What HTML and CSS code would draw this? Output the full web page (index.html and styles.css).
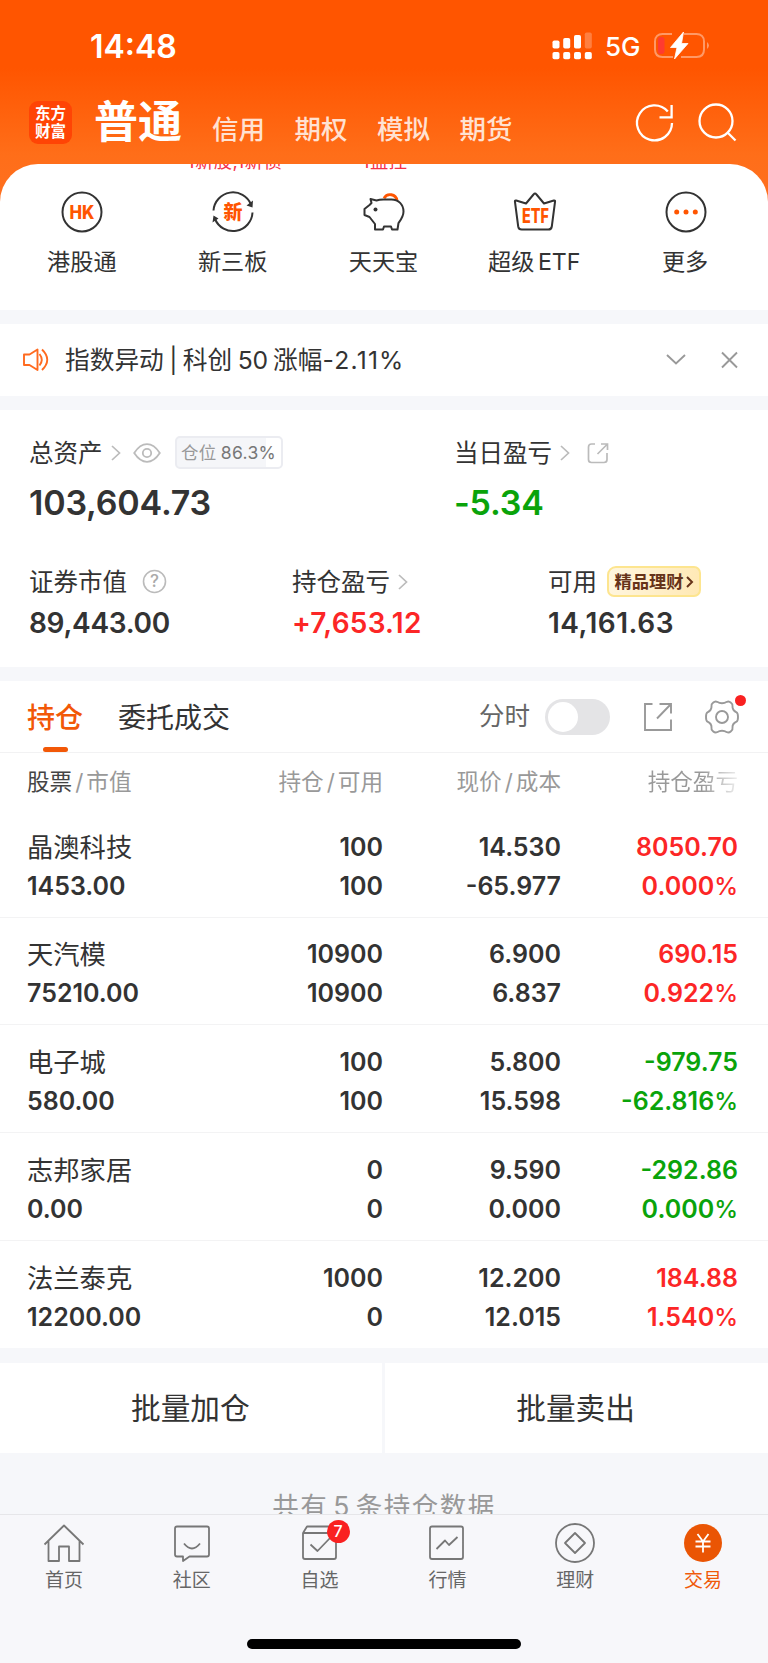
FILE: index.html
```html
<!DOCTYPE html>
<html lang="zh-CN">
<head>
<meta charset="utf-8">
<title>交易</title>
<link rel="stylesheet" href="styles.css">
</head>
<body>
<div class="app">
  <header class="header">
    <div class="status">
      <span class="time">14:48</span>
      <div class="status-right">
        <svg class="signal" width="40" height="28" viewBox="0 0 40 28" fill="#fff">
          <rect x="0.500" y="8.500" width="7" height="8" rx="1.800"/><rect x="11.200" y="6" width="7" height="10.500" rx="1.800"/><rect x="22" y="3" width="7" height="13.500" rx="1.800"/><rect x="32.800" y="0.500" width="7" height="16" rx="1.800" opacity=".25"/>
          <rect x="0.500" y="20" width="7" height="7.200" rx="1.800"/><rect x="11.200" y="20" width="7" height="7.200" rx="1.800"/><rect x="22" y="20" width="7" height="7.200" rx="1.800"/><rect x="32.800" y="20" width="7" height="7.200" rx="1.800"/>
        </svg>
        <span class="net">5G</span>
        <svg class="battery" width="57" height="28" viewBox="0 0 57 28" fill="none">
          <path d="M19 2H9.500C5 2 2 5 2 9.500v8C2 22.500 5 25 9.500 25H20M31 2h12.500C48 2 51 5 51 9.500v8c0 5-3 7.500-7.500 7.500H28" stroke="#fff" stroke-opacity=".4" stroke-width="2"/>
          <path d="M54 10q4 3.500 0 7z" fill="#fff" fill-opacity=".4"/>
          <rect x="5" y="5" width="6.500" height="17" rx="3" fill="#ff3b30"/>
          <path d="M30.500 0 17.500 15.500h6.500L21.500 27 35 11.500h-6.500z" fill="#fff" stroke="#fff" stroke-width=".8"/>
        </svg>
      </div>
    </div>
    <nav class="accounts">
      <div class="logo"><span>东方</span><span>财富</span></div>
      <span class="acct active">普通</span>
      <span class="acct">信用</span><span class="acct">期权</span><span class="acct">模拟</span><span class="acct">期货</span>
      <svg class="head-icons" width="104" height="44" viewBox="0 0 104 44" fill="none" stroke="#fff" stroke-width="2.300">
        <path d="M40 22A17.500 17.500 0 1 1 35.800 10.500M39.600 4v12.300H27.500"/>
        <circle cx="84" cy="20" r="16.500"/><path d="m95.500 31.500 8 8"/>
      </svg>
    </nav>
  </header>

  <section class="shortcuts">
    <span class="tip tip-a">1新股,1新债</span>
    <span class="tip tip-b">1监控</span>
    <div class="short">
      <svg width="44" height="44" viewBox="0 0 44 44"><circle cx="22" cy="22" r="19.500" class="ln"/><text x="22" y="28.500" class="ic hk" textLength="25" lengthAdjust="spacingAndGlyphs">HK</text></svg>
      <span>港股通</span>
    </div>
    <div class="short">
      <svg width="44" height="44" viewBox="0 0 44 44"><path d="M2.500 20.500A19.500 19.500 0 0 1 40 14.500M41.500 22.500A19.500 19.500 0 0 1 4 29" class="ln"/><path d="m42 10.500-.5 7-6-2zM1.500 32.500 2.500 25.500l5 3z" fill="#333"/><text x="22" y="28.800" class="ic xin">新</text></svg>
      <span>新三板</span>
    </div>
    <div class="short">
      <svg width="44" height="44" viewBox="0 0 44 44"><path d="M22 8.200A7 7 0 0 1 35 10.500" fill="none" stroke="#ff5500" stroke-width="2.800"/><path d="M8.500 9l6 1.500c2-.7 4-1 7-1h8c7 0 12 5 12 12 0 5-2.500 8-5 11.500l-1 6.500h-5.500l-1-3h-7l-1 3H13v-5.500L7.500 27l-5-2v-6l5-4 2-2z" class="ln"/><circle cx="13.500" cy="19.500" r="2" fill="#333"/></svg>
      <span>天天宝</span>
    </div>
    <div class="short">
      <svg width="44" height="44" viewBox="0 0 44 44"><path d="M2 12q-.5-2 1.200-1.500l9.800 3L20.500 4.500q1.500-2 3 0l7.500 9 9.800-3q1.700-.5 1.200 1.500l-3.200 24.500q-.4 3-3.500 3H8.700q-3 0-3.500-3z" class="ln"/><text x="22.500" y="32.800" class="ic etf" textLength="27" lengthAdjust="spacingAndGlyphs">ETF</text></svg>
      <span class="super">超级 ETF</span>
    </div>
    <div class="short">
      <svg width="44" height="44" viewBox="0 0 44 44"><circle cx="22" cy="22" r="19.500" class="ln"/><g fill="#ff5500"><circle cx="12.700" cy="22" r="2.500"/><circle cx="22" cy="22" r="2.500"/><circle cx="31.300" cy="22" r="2.500"/></g></svg>
      <span>更多</span>
    </div>
  </section>

  <section class="notice">
    <svg width="28" height="26" viewBox="0 0 28 26" fill="none" stroke="#ff6a1f" stroke-width="1.900"><path d="M2 7.500h5.500L15.500 2.500v20.500L7.500 18H2z" stroke-linejoin="round"/><path d="M17.500 7q4.500 5.800 0 11.500M20 2.500q10.500 10.200 0 20.500"/></svg>
    <span class="notice-text">指数异动 | 科创 <span class="fifty">50</span> 涨幅<span class="pct">-2.11%</span></span>
    <svg width="74" height="20" viewBox="0 0 74 20" fill="none" stroke="#999" stroke-width="1.900"><path d="m2 5 9 8.500L20 5M57 2.500l15 15M72 2.500l-15 15"/></svg>
  </section>

  <section class="assets">
    <div class="asset a1">
      <div class="label">总资产<svg class="chev" width="12" height="18" viewBox="0 0 12 18"><path d="m2 2 7.500 7L2 16"/></svg>
        <svg class="eye" width="28" height="20" viewBox="0 0 28 20" fill="none" stroke="#bbb" stroke-width="1.800"><path d="M1.200 10Q7 1.200 14 1.200T26.800 10Q21 18.800 14 18.800T1.200 10z"/><circle cx="14" cy="10" r="4.200"/></svg>
        <span class="ratio">仓位 <b>86.3%</b></span></div>
      <div class="big">103,604.73</div>
    </div>
    <div class="asset a2">
      <div class="label">当日盈亏<svg class="chev" width="12" height="18" viewBox="0 0 12 18"><path d="m2 2 7.500 7L2 16"/></svg>
        <svg class="share" width="22" height="22" viewBox="0 0 22 22" fill="none" stroke="#bbb" stroke-width="1.700"><path d="M8 2H4.500Q1.500 2 1.500 5v12.500q0 3 3 3h12.500q3 0 3-3V11M14 2h6.500v6M20 2.500 10.500 12"/></svg></div>
      <div class="big green">-5.34</div>
    </div>
    <div class="asset b1"><div class="label">证券市值<svg class="help" width="25" height="25" viewBox="0 0 25 25"><circle cx="12.500" cy="12.500" r="11" fill="none" stroke="#bbb" stroke-width="1.600"/><text x="12.500" y="18.300">?</text></svg></div><div class="mid">89,443.00</div></div>
    <div class="asset b2"><div class="label">持仓盈亏<svg class="chev" width="12" height="18" viewBox="0 0 12 18"><path d="m2 2 7.500 7L2 16"/></svg></div><div class="mid red">+7,653.12</div></div>
    <div class="asset b3"><div class="label">可用<span class="promo">精品理财<svg width="8" height="12" viewBox="0 0 8 12"><path d="m1 1 5 5-5 5" fill="none" stroke="#663319" stroke-width="2"/></svg></span></div><div class="mid">14,161.63</div></div>
  </section>

  <section class="holdings">
    <div class="tabs">
      <span class="tab on">持仓</span><span class="tab">委托成交</span>
      <span class="fs">分时</span><span class="switch"></span>
      <svg class="out" width="30" height="30" viewBox="0 0 30 30" fill="none" stroke="#999" stroke-width="1.900"><path d="M9.500 2H2v26h26V17.500M16.500 2H28v9.500M28 2 14 16.500"/></svg>
      <span class="gear"><svg width="36" height="36" viewBox="0 0 36 36" fill="none" stroke="#999" stroke-width="1.900"><path d="M13 2.800q5 3 10 0 2-.8 4 1 2 1.500 1.500 3.500-.3 4 4 6 1.500 1 1.500 4.700t-1.500 4.700q-4.300 2-4 6 .5 2-1.500 3.500-2 1.800-4 1-5-3-10 0-2 .8-4-1-2-1.500-1.500-3.500.3-4-4-6Q2 21.700 2 18t1.500-4.700q4.300-2 4-6Q7 5.300 9 3.800q2-1.800 4-1z"/><circle cx="18" cy="18" r="6"/></svg><i></i></span>
    </div>
    <div class="row head"><div><em>股票</em><s>/</s>市值</div><div>持仓<s>/</s>可用</div><div>现价<s>/</s>成本</div><div class="fade">持仓盈亏</div></div>
    <div class="row"><div><p class="name">晶澳科技</p><p>1453.00</p></div><div><p>100</p><p>100</p></div><div><p>14.530</p><p>-65.977</p></div><div class="red"><p>8050.70</p><p>0.000<u>%</u></p></div></div>
    <div class="row"><div><p class="name">天汽模</p><p>75210.00</p></div><div><p>10900</p><p>10900</p></div><div><p>6.900</p><p>6.837</p></div><div class="red"><p>690.15</p><p>0.922<u>%</u></p></div></div>
    <div class="row"><div><p class="name">电子城</p><p>580.00</p></div><div><p>100</p><p>100</p></div><div><p>5.800</p><p>15.598</p></div><div class="green"><p>-979.75</p><p>-62.816<u>%</u></p></div></div>
    <div class="row"><div><p class="name">志邦家居</p><p>0.00</p></div><div><p>0</p><p>0</p></div><div><p>9.590</p><p>0.000</p></div><div class="green"><p>-292.86</p><p>0.000<u>%</u></p></div></div>
    <div class="row"><div><p class="name">法兰泰克</p><p>12200.00</p></div><div><p>1000</p><p>0</p></div><div><p>12.200</p><p>12.015</p></div><div class="red"><p>184.88</p><p>1.540<u>%</u></p></div></div>
  </section>

  <div class="batch"><button>批量加仓</button><button>批量卖出</button></div>
  <div class="count">共有 5 条持仓数据</div>

  <nav class="tabbar">
    <div class="item"><svg width="42" height="42" viewBox="0 0 42 42"><path d="M1.500 22.500 21 3.500l19.500 19M5.500 19v20h10.500V24.500h10V39h10.500V19"/></svg><span>首页</span></div>
    <div class="item"><svg width="42" height="42" viewBox="0 0 42 42"><path d="M6 4.500h30q2 0 2 2v26q0 2-2 2H18.500L12 39v-4.500H6q-2 0-2-2v-26q0-2 2-2zM13 21.500q8 10 16 0"/></svg><span>社区</span></div>
    <div class="item"><svg width="42" height="42" viewBox="0 0 42 42"><path d="M4 11v24q0 2 2 2h29q2 0 2-2V11H4zl4-6.500h26L37 11M11.500 22.500l7 6.500L32 15"/></svg><b class="badge">7</b><span>自选</span></div>
    <div class="item"><svg width="42" height="42" viewBox="0 0 42 42"><path d="M6 4.500h29q2 0 2 2v28.500q0 2-2 2H6q-2 0-2-2V6.500q0-2 2-2zM10.500 27 19 18.500l4 4.500 8.500-8"/></svg><span>行情</span></div>
    <div class="item"><svg width="42" height="42" viewBox="0 0 42 42"><circle cx="21" cy="21" r="19"/><path d="M21 11 31 21 21 31 11 21z"/></svg><span>理财</span></div>
    <div class="item cur"><svg width="42" height="42" viewBox="0 0 42 42"><circle cx="21" cy="21" r="19"/><path d="m15.500 12 5.500 7.500 5.500-7.500M13.500 19.500h15M13.500 24.500h15M21 19.500v11"/></svg><span>交易</span></div>
    <div class="home"></div>
  </nav>
</div>
</body>
</html>
```

FILE: styles.css
```css
* { box-sizing: border-box; margin: 0; padding: 0; }
body { width: 768px; height: 1663px; overflow: hidden; background: #f6f7fa; color: #333; font-family: Inter, "Noto Sans CJK SC", sans-serif; }
svg { display: block; flex: none; overflow: visible; }
.app { height: 1663px; display: flex; flex-direction: column; overflow: hidden; }
.red { color: #fc2626; }
.green { color: #0aa30a; }

.header { height: 204px; flex: none; background: linear-gradient(#ff5500 0, #ff5500 68px, #ff6e19 155px, #ff7020 204px); color: #fff; }
.status { height: 93px; display: flex; justify-content: space-between; padding: 0 58px 0 90px; }
.time { font-size: 32px; line-height: 93px; font-weight: 600; }
.status-right { display: flex; padding-top: 32px; }
.net { font-size: 26px; line-height: 30px; font-weight: 500; margin-left: 13px; width: 48px; }
.accounts { height: 71px; display: flex; padding: 0 32px 0 29px; }
.logo { width: 43px; height: 43px; margin: 8px 22px 0 0; border-radius: 9px; background: #ff4405; display: flex; flex-direction: column; align-items: center; padding-top: 2px; font: 700 15.500px/18px "Noto Sans CJK SC", sans-serif; }
.acct { font-size: 26.500px; line-height: 72px; color: rgba(255,255,255,.82); margin-right: 29.500px; font-weight: 500; white-space: nowrap; }
.acct.active { font-size: 44px; line-height: 59px; color: #fff; font-weight: 700; margin-right: 30px; }
.head-icons { margin: 8px 0 0 auto; }

.shortcuts { position: relative; flex: none; height: 146px; margin-top: -40.500px; background: #fff; border-radius: 38px 38px 0 0; display: flex; padding: 26px 7px 0; overflow: hidden; }
.short { flex: 1; display: flex; flex-direction: column; align-items: center; font-size: 23.200px; line-height: 30px; gap: 13.500px; white-space: nowrap; }
.short span { margin-left: -1px; }
.super { word-spacing: -3px; }
.ln { fill: none; stroke: #333; stroke-width: 2; stroke-linejoin: round; }
.ic { fill: #ff5500; text-anchor: middle; font-weight: 800; }
.hk { font-size: 18.500px; }
.xin { font-size: 19px; }
.etf { font-size: 19.500px; }
.tip { position: absolute; top: -12.500px; font-size: 18.300px; line-height: 20px; letter-spacing: .5px; color: #f5314a; white-space: nowrap; }
.tip-a { left: 187px; }
.tip-b { left: 362px; }

.notice { height: 72px; flex: none; margin-top: 14px; background: #fff; display: flex; align-items: center; padding: 0 29px 0 22px; }
.notice-text { font-size: 24.700px; line-height: 36px; margin: 0 0 0 15px; flex: 1; white-space: nowrap; word-spacing: -1.500px; }
.fifty { letter-spacing: -.3px; }
.pct { letter-spacing: 1.200px; }

.assets { position: relative; height: 257px; flex: none; margin-top: 14px; background: #fff; display: grid; grid-template-columns: repeat(384, 2px); grid-template-rows: 130px 127px; }
.a1 { grid-column: 1 / 228; }
.a2 { grid-column: 228 / 385; }
.b1 { grid-column: 1 / 147; }
.b2 { grid-column: 147 / 275; }
.b3 { grid-column: 275 / 385; }
.a1, .b1 { padding-left: 29px; }
.a1, .a2 { padding-top: 24px; }
.label { display: flex; align-items: center; height: 38px; font-size: 24.500px; line-height: 34px; white-space: nowrap; }
.chev { margin-left: 7px; fill: none; stroke: #bbb; stroke-width: 1.700; }
.eye { margin-left: 11px; }
.ratio { margin-left: 14px; width: 108px; height: 33px; border: 2px solid #ebecf1; border-radius: 5px; background: linear-gradient(90deg, #f5f6f9 86%, #fff 86%); color: #999; font-size: 17.500px; line-height: 30px; text-align: center; letter-spacing: .3px; word-spacing: -1px; }
.ratio b { font-weight: 400; color: #777; }
.share { margin-left: 15.500px; }
.big { font-size: 34px; line-height: 42px; margin-top: 10px; font-weight: 600; letter-spacing: -.2px; }
.mid { font-size: 28px; line-height: 36px; margin-top: 4px; font-weight: 600; }
.b1 .mid { letter-spacing: -.3px; }
.b2 .mid { letter-spacing: .25px; }
.b3 .mid { letter-spacing: .5px; }
.b1, .b2, .b3 { padding-top: 23px; }
.help { margin-left: 14.500px; }
.help text { font: 500 17px Inter; fill: #aaa; text-anchor: middle; }
.promo { margin-left: 10px; width: 94px; height: 31px; border: 2px solid #fde58f; border-radius: 9px 7px 7px 7px; background: linear-gradient(100deg, #fff6df, #ffe9b5); display: flex; align-items: center; justify-content: center; gap: 2px; color: #663319; font-size: 17.300px; line-height: 27px; font-weight: 700; }

.holdings { flex: none; height: 667px; margin-top: 14px; background: #fff; }
.tabs { height: 72px; border-bottom: 1.500px solid #f2f2f3; display: flex; align-items: center; padding: 0 28px 0 27px; font-size: 28px; white-space: nowrap; }
.tab { height: 71px; line-height: 74px; margin-right: 35px; }
.tab.on { color: #f25807; font-weight: 500; position: relative; }
.tab.on::after { content: ""; position: absolute; left: 16px; bottom: 0; width: 25px; height: 5px; border-radius: 3px; background: #f25807; }
.fs { margin: 0 0 0 auto; font-size: 25.500px; line-height: 36px; color: #666; }
.switch { width: 65px; height: 36px; border-radius: 18px; background: #e4e4e6; margin: 1px 33px 0 15px; padding: 3px; }
.switch::before { content: ""; display: block; width: 30px; height: 30px; border-radius: 50%; background: #fff; }
.out { margin-top: 1px; }
.gear { position: relative; margin: 1px 0 0 31px; }
.gear i { position: absolute; right: -6px; top: -4px; width: 11px; height: 11px; border-radius: 50%; background: #f92121; }
.row { height: 107.700px; display: grid; grid-template-columns: 204px 152px 178px 177px; padding: 17.800px 0 0 27px; font-size: 25px; line-height: 39px; font-weight: 600; border-bottom: 1.500px solid #f3f3f4; white-space: nowrap; }
.row > div + div { text-align: right; }
.row:last-child { border: 0; }
.row .name { font-size: 26.300px; font-weight: 400; }
.row u { text-decoration: none; font-weight: 500; display: inline-block; font-size: 24px; }
.row.head { height: 57.500px; padding-top: 9px; border: 0; font-size: 22.600px; font-weight: 400; color: #999; }
.head em { font-style: normal; color: #444; }
.head s { text-decoration: none; margin: 0 3px; }
.fade { background: linear-gradient(90deg, #999 80%, #eee 100%); -webkit-background-clip: text; color: transparent; }

.batch { flex: none; display: flex; gap: 3.500px; margin-top: 15px; height: 90px; padding-right: 1px; background: linear-gradient(90deg, transparent 60%, #fff 60%); }
.batch button { flex: 1; border: 0; background: #fff; color: #333; font: 400 29.700px "Noto Sans CJK SC", sans-serif; padding: 0 1px 2px 0; }
.count { flex: none; height: 61px; overflow: hidden; padding-top: 33px; text-align: center; font-size: 26.500px; line-height: 40px; color: #999; letter-spacing: 1.500px; word-spacing: -4px; }
.tabbar { position: relative; flex: none; height: 149px; background: #f7f7fa; border-top: 1.500px solid #e6e6e9; display: grid; grid-template-columns: repeat(6, 1fr); padding: 7px 1px 0 0; }
.item { position: relative; display: flex; flex-direction: column; align-items: center; font-size: 19px; line-height: 28px; color: #666; gap: 3px; height: 75px; }
.item svg { fill: none; stroke: #777; stroke-width: 1.800; stroke-linejoin: round; }
.item.cur { color: #f05a0a; }
.item.cur circle { fill: #ea5504; stroke: none; }
.item.cur path { stroke: #fff; }
.badge { position: absolute; left: 71px; top: -2px; width: 23px; height: 23px; border-radius: 50%; background: #f92121; color: #fff; font: 500 16px/23px Inter; text-align: center; }
.home { position: absolute; left: 247px; bottom: 14px; width: 274px; height: 10px; border-radius: 5px; background: #000; }
```
